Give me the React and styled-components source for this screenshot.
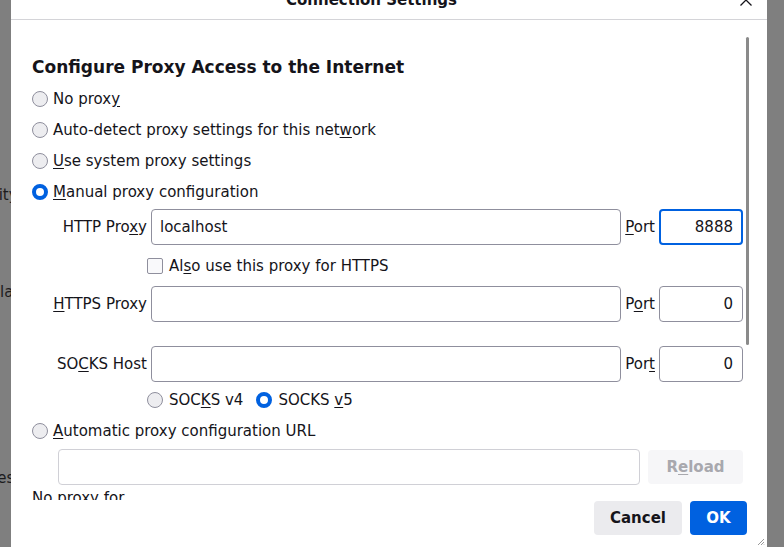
import React from "react";
import styled, { createGlobalStyle, css } from "styled-components";

const GlobalStyle = createGlobalStyle`
  html, body { margin: 0; padding: 0; overflow: hidden; }
  body { font-family: "DejaVu Sans", "Liberation Sans", sans-serif; }
  * { box-sizing: border-box; }
`;

const Screen = styled.div`
  position: relative;
  width: 784px;
  height: 547px;
  overflow: hidden;
  background: #7f7f7f;
  font-family: "DejaVu Sans", sans-serif;
  font-size: 15px;
  line-height: 18px;
  color: #15141a;
`;

const Backdrop = styled.div`
  display: flex;
  flex-direction: column;
  padding-top: 186px;
  color: #0b0a0d;
  opacity: 0.85;
`;

const BackdropLine = styled.div`
  white-space: nowrap;
  margin-top: ${(p) => p.$top || 0}px;
  margin-left: ${(p) => p.$shift}px;
`;

const Dialog = styled.div`
  position: absolute;
  left: 11px;
  top: -20px;
  width: 756px;
  height: 567px;
  background: #ffffff;
  display: flex;
  flex-direction: column;
`;

const Header = styled.div`
  height: 40px;
  flex: none;
  display: flex;
  align-items: center;
  border-bottom: 1px solid #d4d4d8;
`;

const Title = styled.div`
  flex: 1;
  text-align: center;
  font-weight: bold;
  font-size: 15px;
`;

const CloseButton = styled.div`
  width: 28px;
  height: 28px;
  margin-right: 7px;
  display: flex;
  align-items: center;
  justify-content: center;
  color: #15141a;
`;

const Body = styled.div`
  flex: 1;
  display: flex;
  min-height: 0;
`;

const Content = styled.div`
  width: 732px;
  padding: 37px 0 0 21px;
  overflow: hidden;
  display: flex;
  flex-direction: column;
  & > * {
    flex-shrink: 0;
  }
`;

const ScrollThumb = styled.div`
  width: 3px;
  height: 308px;
  margin: 17px 0 0 3px;
  border-radius: 2px;
  background: #8a8a8a;
`;

const Heading = styled.h2`
  margin: 0 0 6px;
  font-size: 17px;
  line-height: 20px;
  font-weight: bold;
`;

const OptionRow = styled.label`
  display: flex;
  align-items: center;
  gap: 5px;
  height: ${(p) => p.$h || 31}px;
  white-space: nowrap;
`;

const Radio = styled.span`
  flex: none;
  width: 16px;
  height: 16px;
  border-radius: 50%;
  ${(p) =>
    p.$checked
      ? css`
          border: 4px solid #0061e0;
          background: #ffffff;
        `
      : css`
          border: 1px solid #8f8f9d;
          background: #ededf0;
        `}
`;

const Checkbox = styled.span`
  flex: none;
  width: 16px;
  height: 16px;
  border-radius: 2px;
  border: 1px solid #8f8f9d;
  background: #f9f9fb;
`;

const ProxyGrid = styled.div`
  display: grid;
  grid-template-columns: 115px 1fr auto 84px;
  column-gap: 4px;
  align-items: center;
  margin-top: 2px;
`;

const FieldLabel = styled.span`
  justify-self: end;
  white-space: nowrap;
`;

const TextBox = styled.div`
  height: 36px;
  border: ${(p) => (p.$focused ? "2px solid #0061e0" : "1px solid #8f8f9d")};
  border-radius: 4px;
  background: #fff;
  display: flex;
  align-items: center;
  justify-content: ${(p) => (p.$right ? "flex-end" : "flex-start")};
  padding: ${(p) => (p.$right ? (p.$focused ? "0 8px 0 0" : "0 9px 0 0") : "0 0 0 8px")};
  ${(p) =>
    p.$disabled &&
    css`
      border-color: #d0d0d6;
    `}
`;

const SubRow = styled.div`
  grid-column: 1 / -1;
  display: flex;
  align-items: center;
  gap: 13px;
  padding-left: 115px;
  height: ${(p) => p.$h}px;
`;

const Spacer = styled.div`
  grid-column: 1 / -1;
  height: ${(p) => p.$h}px;
`;

const Inline = styled.label`
  display: flex;
  align-items: center;
  gap: 6px;
  white-space: nowrap;
`;

const UrlRow = styled.div`
  display: flex;
  align-items: center;
  gap: 8px;
  padding-left: 26px;
  margin-top: 5px;
`;

const UrlBox = styled(TextBox)`
  flex: 1;
`;

const ReloadButton = styled.div`
  width: 95px;
  height: 34px;
  border-radius: 4px;
  background: #f6f6f8;
  color: #a8a8ae;
  font-weight: bold;
  display: flex;
  align-items: center;
  justify-content: center;
`;

const NoProxyLabel = styled.div`
  margin-top: 4px;
  white-space: nowrap;
`;

const Footer = styled.div`
  flex: none;
  height: 47px;
  display: flex;
  justify-content: flex-end;
  gap: 8px;
  padding: 1px 20px 12px;
  position: relative;
`;

const Button = styled.div`
  height: 34px;
  padding: 0 16px;
  border-radius: 4px;
  font-weight: bold;
  display: flex;
  align-items: center;
  justify-content: center;
  ${(p) =>
    p.$primary
      ? css`
          background: #0061e0;
          color: #ffffff;
          min-width: 57px;
        `
      : css`
          background: #ebebee;
          color: #15141a;
          min-width: 88px;
        `}
`;

const Grip = styled.svg`
  position: absolute;
  right: 2px;
  bottom: 1px;
`;

const U = styled.u`
  text-underline-offset: 2px;
`;

export default function App() {
  return (
    <Screen>
      <GlobalStyle />
      <Backdrop>
        <BackdropLine $shift={-44}>Security</BackdropLine>
        <BackdropLine $shift={-33} $top={79}>Display</BackdropLine>
        <BackdropLine $shift={-74} $top={168}>Preferences</BackdropLine>
      </Backdrop>
      <Dialog>
        <Header>
          <Title>Connection Settings</Title>
          <CloseButton>
            <svg width="14" height="14" viewBox="0 0 14 14">
              <path d="M1.5 1.5 L12.5 12.5 M12.5 1.5 L1.5 12.5" stroke="#15141a" strokeWidth="1.3" fill="none" />
            </svg>
          </CloseButton>
        </Header>
        <Body>
          <Content>
            <Heading>Configure Proxy Access to the Internet</Heading>
            <OptionRow>
              <Radio />
              <span>No prox<U>y</U></span>
            </OptionRow>
            <OptionRow>
              <Radio />
              <span>Auto-detect proxy settings for this net<U>w</U>ork</span>
            </OptionRow>
            <OptionRow>
              <Radio />
              <span><U>U</U>se system proxy settings</span>
            </OptionRow>
            <OptionRow>
              <Radio $checked />
              <span><U>M</U>anual proxy configuration</span>
            </OptionRow>
            <ProxyGrid>
              <FieldLabel>HTTP Pro<U>x</U>y</FieldLabel>
              <TextBox>localhost</TextBox>
              <span><U>P</U>ort</span>
              <TextBox $right $focused>8888</TextBox>

              <SubRow $h={41}>
                <Inline>
                  <Checkbox />
                  <span>Al<U>s</U>o use this proxy for HTTPS</span>
                </Inline>
              </SubRow>

              <FieldLabel><U>H</U>TTPS Proxy</FieldLabel>
              <TextBox />
              <span>P<U>o</U>rt</span>
              <TextBox $right>0</TextBox>

              <Spacer $h={24} />

              <FieldLabel>SO<U>C</U>KS Host</FieldLabel>
              <TextBox />
              <span>Por<U>t</U></span>
              <TextBox $right>0</TextBox>

              <SubRow $h={36}>
                <Inline>
                  <Radio />
                  <span>SOC<U>K</U>S v4</span>
                </Inline>
                <Inline>
                  <Radio $checked />
                  <span>SOCKS <U>v</U>5</span>
                </Inline>
              </SubRow>
            </ProxyGrid>
            <OptionRow $h={26}>
              <Radio />
              <span><U>A</U>utomatic proxy configuration URL</span>
            </OptionRow>
            <UrlRow>
              <UrlBox $disabled />
              <ReloadButton>R<U>e</U>load</ReloadButton>
            </UrlRow>
            <NoProxyLabel>No proxy for</NoProxyLabel>
          </Content>
          <ScrollThumb />
        </Body>
        <Footer>
          <Button>Cancel</Button>
          <Button $primary>OK</Button>
          <Grip width="8" height="8" viewBox="0 0 8 8">
            <path d="M7 1 L1 7 M7 4 L4 7 M7 6.5 L6.5 7" stroke="#9a9a9a" strokeWidth="1" fill="none" />
          </Grip>
        </Footer>
      </Dialog>
    </Screen>
  );
}
